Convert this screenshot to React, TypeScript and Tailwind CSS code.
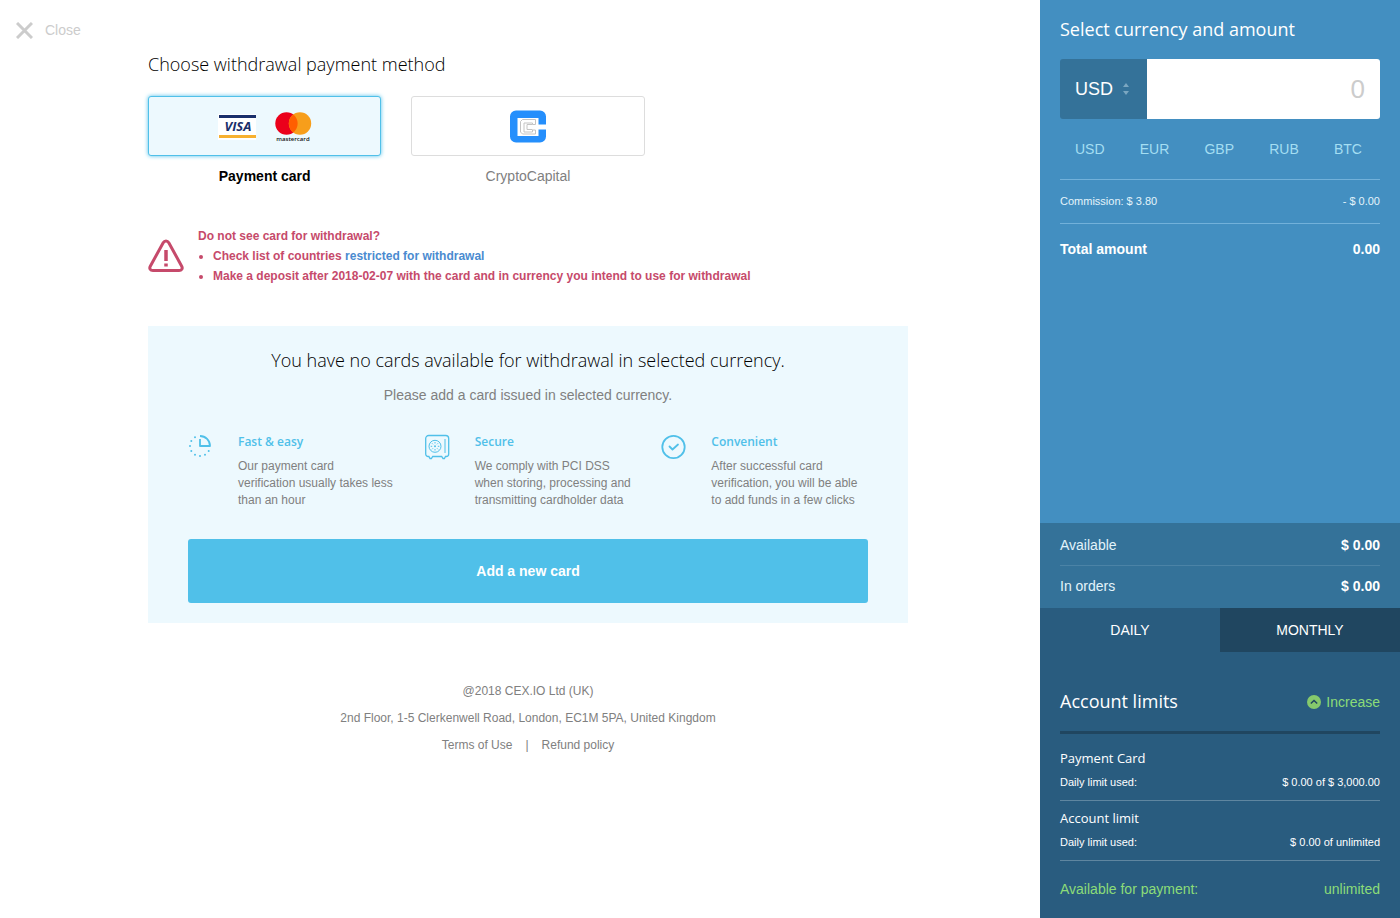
import { useState } from 'react';
import type { ReactNode } from 'react';
import clsx from 'clsx';

const currencies = ['USD', 'EUR', 'GBP', 'RUB', 'BTC'];

const limits = [
  { title: 'Payment Card', used: '$ 0.00 of $ 3,000.00' },
  { title: 'Account limit', used: '$ 0.00 of unlimited' },
];

function VisaLogo() {
  return (
    <svg width="38" height="26" viewBox="0 0 38 26" aria-label="Visa">
      <rect width="38" height="26" fill="#fff" />
      <rect x="1" y="1" width="37" height="3" fill="#1a2f6b" />
      <rect x="1" y="21" width="37" height="3" fill="#f7b02f" />
      <text x="20" y="17" textAnchor="middle" fontSize="13" fontWeight="700" fontStyle="italic" fontFamily="'Open Sans', sans-serif" fill="#1a2f6b">
        VISA
      </text>
    </svg>
  );
}

function MastercardLogo() {
  return (
    <svg width="38" height="32" viewBox="0 0 38 32" aria-label="Mastercard">
      <circle cx="12.500" cy="12.500" r="11.200" fill="#eb001b" />
      <circle cx="26" cy="12.500" r="11.200" fill="#f79e1b" />
      <path d="M19.250 3.600a11.200 11.200 0 0 1 0 17.800a11.200 11.200 0 0 1 0-17.800z" fill="#ff5f00" />
      <text x="19" y="30" textAnchor="middle" fontSize="6" fontWeight="600" fontFamily="'Open Sans', sans-serif" fill="#111">
        mastercard
      </text>
    </svg>
  );
}

function CryptoCapitalLogo() {
  return (
    <svg width="36" height="34" viewBox="0 0 36 34" fill="none" aria-label="CryptoCapital">
      <path d="M6 .5h24a6 6 0 0 1 6 6v8h-7.500V8H7.500v18h21v-6.500H36v7a6 6 0 0 1-6 6H6a6 6 0 0 1-6-6v-20a6 6 0 0 1 6-6z" fill="#258ffc" />
      <path d="M12.500 9.500h13v5h-3v-1.500H14v9h8.500v-2h3v4h-13l-2-2v-10.500z" stroke="#c4c4c4" />
      <path d="M22.500 14.500H17v5h5.500" stroke="#c4c4c4" />
    </svg>
  );
}

function WarningIcon() {
  return (
    <svg className="shrink-0" width="36" height="34" viewBox="0 0 36 34" fill="none" stroke="#c64a6b">
      <path d="M15.200 3.700 2.300 27.200c-1.300 2.300.1 4.300 2.600 4.300h26.200c2.500 0 3.900-2 2.600-4.300L20.800 3.700c-1.400-2.400-4.200-2.400-5.600 0z" strokeWidth="3" strokeLinejoin="round" />
      <path d="M18 11v11M18 24.500v3" strokeWidth="3.500" />
    </svg>
  );
}

function ClockIcon() {
  return (
    <svg width="24" height="24" viewBox="0 0 24 24" fill="none" stroke="#50c0e9">
      <path d="M12 2A10 10 0 0 1 22 12H12V5" strokeWidth="1.800" strokeLinejoin="round" />
      <path
        d="M20.700 17v.01M17 20.700v.01M12 22v.01M7 20.700v.01M3.300 17v.01M2 12v.01M3.300 7v.01M7 3.300v.01"
        strokeWidth="2"
        strokeLinecap="round"
      />
    </svg>
  );
}

function SafeIcon() {
  return (
    <svg width="25" height="26" viewBox="0 0 25 26" fill="none" stroke="#50c0e9">
      <path d="M3.700 1.500h17a3 3 0 0 1 3 3V20a2.500 2.500 0 0 1-2.500 2.500h-.7l-1.100 2H18l-1.300-2h-9l-1.300 2H5l-1.100-2h-.7A2.500 2.500 0 0 1 .7 20V4.500a3 3 0 0 1 3-3z" strokeWidth="1.300" />
      <path d="M20 5v14" />
      <circle cx="10" cy="12.300" r="6" />
      <circle cx="10" cy="12.300" r="1" fill="#50c0e9" stroke="none" />
      <path d="M10 8v1.500M10 15v1.500M5.700 12.300h1.500M12.800 12.300h1.500M7 9.300l1 1M12 14.300l1 1M13 9.300l-1 1M8 14.300l-1 1" />
    </svg>
  );
}

function CheckIcon() {
  return (
    <svg width="26" height="26" viewBox="0 0 26 26" fill="none" stroke="#50c0e9" strokeWidth="1.800">
      <circle cx="12.500" cy="13" r="11.200" />
      <path d="m8.500 12.500 3 3 5.500-5" strokeLinecap="round" strokeLinejoin="round" />
    </svg>
  );
}

function Feature({ icon, title, children }: { icon: ReactNode; title: string; children: ReactNode }) {
  return (
    <div className="flex">
      <div className="w-[50px] shrink-0">{icon}</div>
      <div>
        <h3 className="font-['Open_Sans',sans-serif] text-xs leading-4 font-semibold text-[#50c0e9]">{title}</h3>
        <p className="mt-2 text-xs leading-[17px] text-[#808080]">{children}</p>
      </div>
    </div>
  );
}

function Method({ label, active, onClick, children }: { label: string; active: boolean; onClick: () => void; children: ReactNode }) {
  return (
    <button type="button" onClick={onClick} aria-pressed={active} className="block text-center">
      <span
        className={clsx(
          'flex h-[60px] items-center justify-center gap-[18px] rounded-[3px] border pt-px',
          active ? 'border-[#50c0e9] bg-[#edf9fe] shadow-[0_0_4px_#50c0e9]' : 'border-[#ddd] bg-white',
        )}
      >
        {children}
      </span>
      <span className={clsx('mt-[10px] block text-sm leading-5', active ? 'font-bold text-black' : 'text-[#808080]')}>
        {label}
      </span>
    </button>
  );
}

function Sidebar() {
  const [currency, setCurrency] = useState('USD');
  const [period, setPeriod] = useState('daily');

  return (
    <aside className="flex w-[360px] shrink-0 flex-col bg-[#438fc1] text-white">
      <div className="flex-1 px-5 pt-[17px]">
        <h2 className="font-['Open_Sans',sans-serif] text-lg leading-6">Select currency and amount</h2>
        <div className="mt-[18px] flex h-[60px] overflow-hidden rounded-[3px]">
          <div className="relative w-[87px] shrink-0 bg-[#347299]">
            <select
              aria-label="Currency"
              value={currency}
              onChange={(e) => setCurrency(e.target.value)}
              className="h-full w-full appearance-none pl-[15px] text-lg text-white outline-none"
            >
              {currencies.map((c) => (
                <option key={c}>{c}</option>
              ))}
            </select>
            <svg className="pointer-events-none absolute top-6 right-[18px]" width="6" height="12" viewBox="0 0 6 12" fill="#7ba7c1">
              <path d="M0 4 3 0l3 4zM0 8l3 4 3-4z" />
            </svg>
          </div>
          <input
            aria-label="Amount"
            placeholder="0"
            className="min-w-0 flex-1 bg-white px-[15px] text-right text-[26px] text-black outline-none placeholder:text-[#ccc]"
          />
        </div>
        <div className="mt-5 flex justify-between pr-[18px] pb-5 pl-[15px] text-sm leading-5 text-[#a4def2]">
          {currencies.map((c) => (
            <button key={c} type="button" onClick={() => setCurrency(c)}>
              {c}
            </button>
          ))}
        </div>
        <div className="flex justify-between border-y border-[#72b1da] py-[13px] text-[11px] leading-[17px] text-[#e3f4fb]">
          <span>Commission: $ 3.80</span>
          <span>- $ 0.00</span>
        </div>
        <div className="mt-[15px] flex justify-between text-sm leading-5 font-bold">
          <span>Total amount</span>
          <span>0.00</span>
        </div>
      </div>

      <dl className="bg-[#347299] px-5 py-px text-sm leading-5">
        <div className="flex justify-between border-b border-[#4b83a6] pt-[11px] pb-[10px]">
          <dt className="text-[#e3f4fb]">Available</dt>
          <dd className="font-bold">$ 0.00</dd>
        </div>
        <div className="flex justify-between pt-[10px] pb-[11px]">
          <dt className="text-[#e3f4fb]">In orders</dt>
          <dd className="font-bold">$ 0.00</dd>
        </div>
      </dl>

      <div className="bg-[#295c7f]">
        <div className="grid h-11 grid-cols-2 text-sm">
          <button type="button" onClick={() => setPeriod('daily')} className={clsx(period !== 'daily' && 'bg-[#204660]')}>
            DAILY
          </button>
          <button type="button" onClick={() => setPeriod('monthly')} className={clsx(period !== 'monthly' && 'bg-[#204660]')}>
            MONTHLY
          </button>
        </div>
        <div className="px-5 pt-[37px] pb-[19px]">
          <div className="flex items-end justify-between border-b-[3px] border-[#204660] pb-[18px]">
            <h2 className="font-['Open_Sans',sans-serif] text-lg leading-6">Account limits</h2>
            <a href="#increase" className="flex items-center gap-[5px] text-sm leading-[22px] text-[#8cdc78]">
              <svg width="14" height="14" viewBox="0 0 14 14" fill="none">
                <circle cx="7" cy="7" r="7" fill="#86c96c" />
                <path d="m3.800 8.500 3.200-3 3.200 3" stroke="#204660" strokeWidth="1.500" />
              </svg>
              Increase
            </a>
          </div>
          <div className="pt-[7px]">
            {limits.map((l) => (
              <section key={l.title} className="border-b border-[#5f86a0] pt-[7px] pb-[9px]">
                <h3 className="font-['Open_Sans',sans-serif] text-[13px] leading-5">{l.title}</h3>
                <div className="mt-[6px] flex justify-between text-[11px] leading-[17px]">
                  <span>{period === 'daily' ? 'Daily' : 'Monthly'} limit used:</span>
                  <span>{l.used}</span>
                </div>
              </section>
            ))}
          </div>
          <div className="mt-[18px] flex justify-between text-sm leading-5 text-[#8cdc78]">
            <span>Available for payment:</span>
            <span>unlimited</span>
          </div>
        </div>
      </div>
    </aside>
  );
}

export default function App() {
  const [method, setMethod] = useState('card');

  return (
    <div className="flex min-h-screen bg-white font-['Liberation_Sans',Arial,sans-serif]">
      <main className="min-w-0 flex-1 pt-5 pl-4">
        <button type="button" className="flex h-5 items-center gap-3 text-sm text-[#ccc]">
          <svg width="17" height="17" viewBox="0 0 17 17" stroke="#ccc" strokeWidth="3">
            <path d="m1 1 15 15M16 1 1 16" />
          </svg>
          Close
        </button>

        <div className="mx-auto max-w-[760px]">
          <h1 className="mt-3 font-['Open_Sans',sans-serif] text-lg leading-6 font-light text-black">
            Choose withdrawal payment method
          </h1>
          <div className="mt-5 grid grid-cols-3 gap-[30px]">
            <Method label="Payment card" active={method === 'card'} onClick={() => setMethod('card')}>
              <VisaLogo />
              <MastercardLogo />
            </Method>
            <Method label="CryptoCapital" active={method === 'crypto'} onClick={() => setMethod('crypto')}>
              <CryptoCapitalLogo />
            </Method>
          </div>

          <div className="mt-10 flex items-center gap-[14px] text-xs leading-5 font-bold text-[#c64a6b]">
            <WarningIcon />
            <div>
              <p>Do not see card for withdrawal?</p>
              <ul className="list-disc pl-[15px]">
                <li>
                  Check list of countries{' '}
                  <a href="#restricted" className="text-[#4a8bd0]">
                    restricted for withdrawal
                  </a>
                </li>
                <li>Make a deposit after 2018-02-07 with the card and in currency you intend to use for withdrawal</li>
              </ul>
            </div>
          </div>

          <section className="mt-10 bg-[#edf9fe] px-10 pt-[22px] pb-5">
            <h2 className="text-center font-['Open_Sans',sans-serif] text-lg leading-6 font-light text-black">
              You have no cards available for withdrawal in selected currency.
            </h2>
            <p className="mt-[13px] text-center text-sm leading-5 text-[#808080]">
              Please add a card issued in selected currency.
            </p>
            <div className="mt-[29px] grid grid-cols-3 gap-[30px]">
              <Feature icon={<ClockIcon />} title="Fast & easy">
                Our payment card verification usually takes less than an hour
              </Feature>
              <Feature icon={<SafeIcon />} title="Secure">
                We comply with PCI DSS when storing, processing and transmitting cardholder data
              </Feature>
              <Feature icon={<CheckIcon />} title="Convenient">
                After successful card verification, you will be able to add funds in a few clicks
              </Feature>
            </div>
            <button type="button" className="mt-[30px] h-16 w-full rounded-[3px] bg-[#50c0e9] text-sm font-bold text-white">
              Add a new card
            </button>
          </section>

          <footer className="mt-[55px] pb-10 text-center text-xs leading-[27px] text-[#808080]">
            <p>@2018 CEX.IO Ltd (UK)</p>
            <p>2nd Floor, 1-5 Clerkenwell Road, London, EC1M 5PA, United Kingdom</p>
            <p className="flex justify-center gap-[13px]">
              <a href="#terms">Terms of Use</a>
              <span>|</span>
              <a href="#refund">Refund policy</a>
            </p>
          </footer>
        </div>
      </main>
      <Sidebar />
    </div>
  );
}
